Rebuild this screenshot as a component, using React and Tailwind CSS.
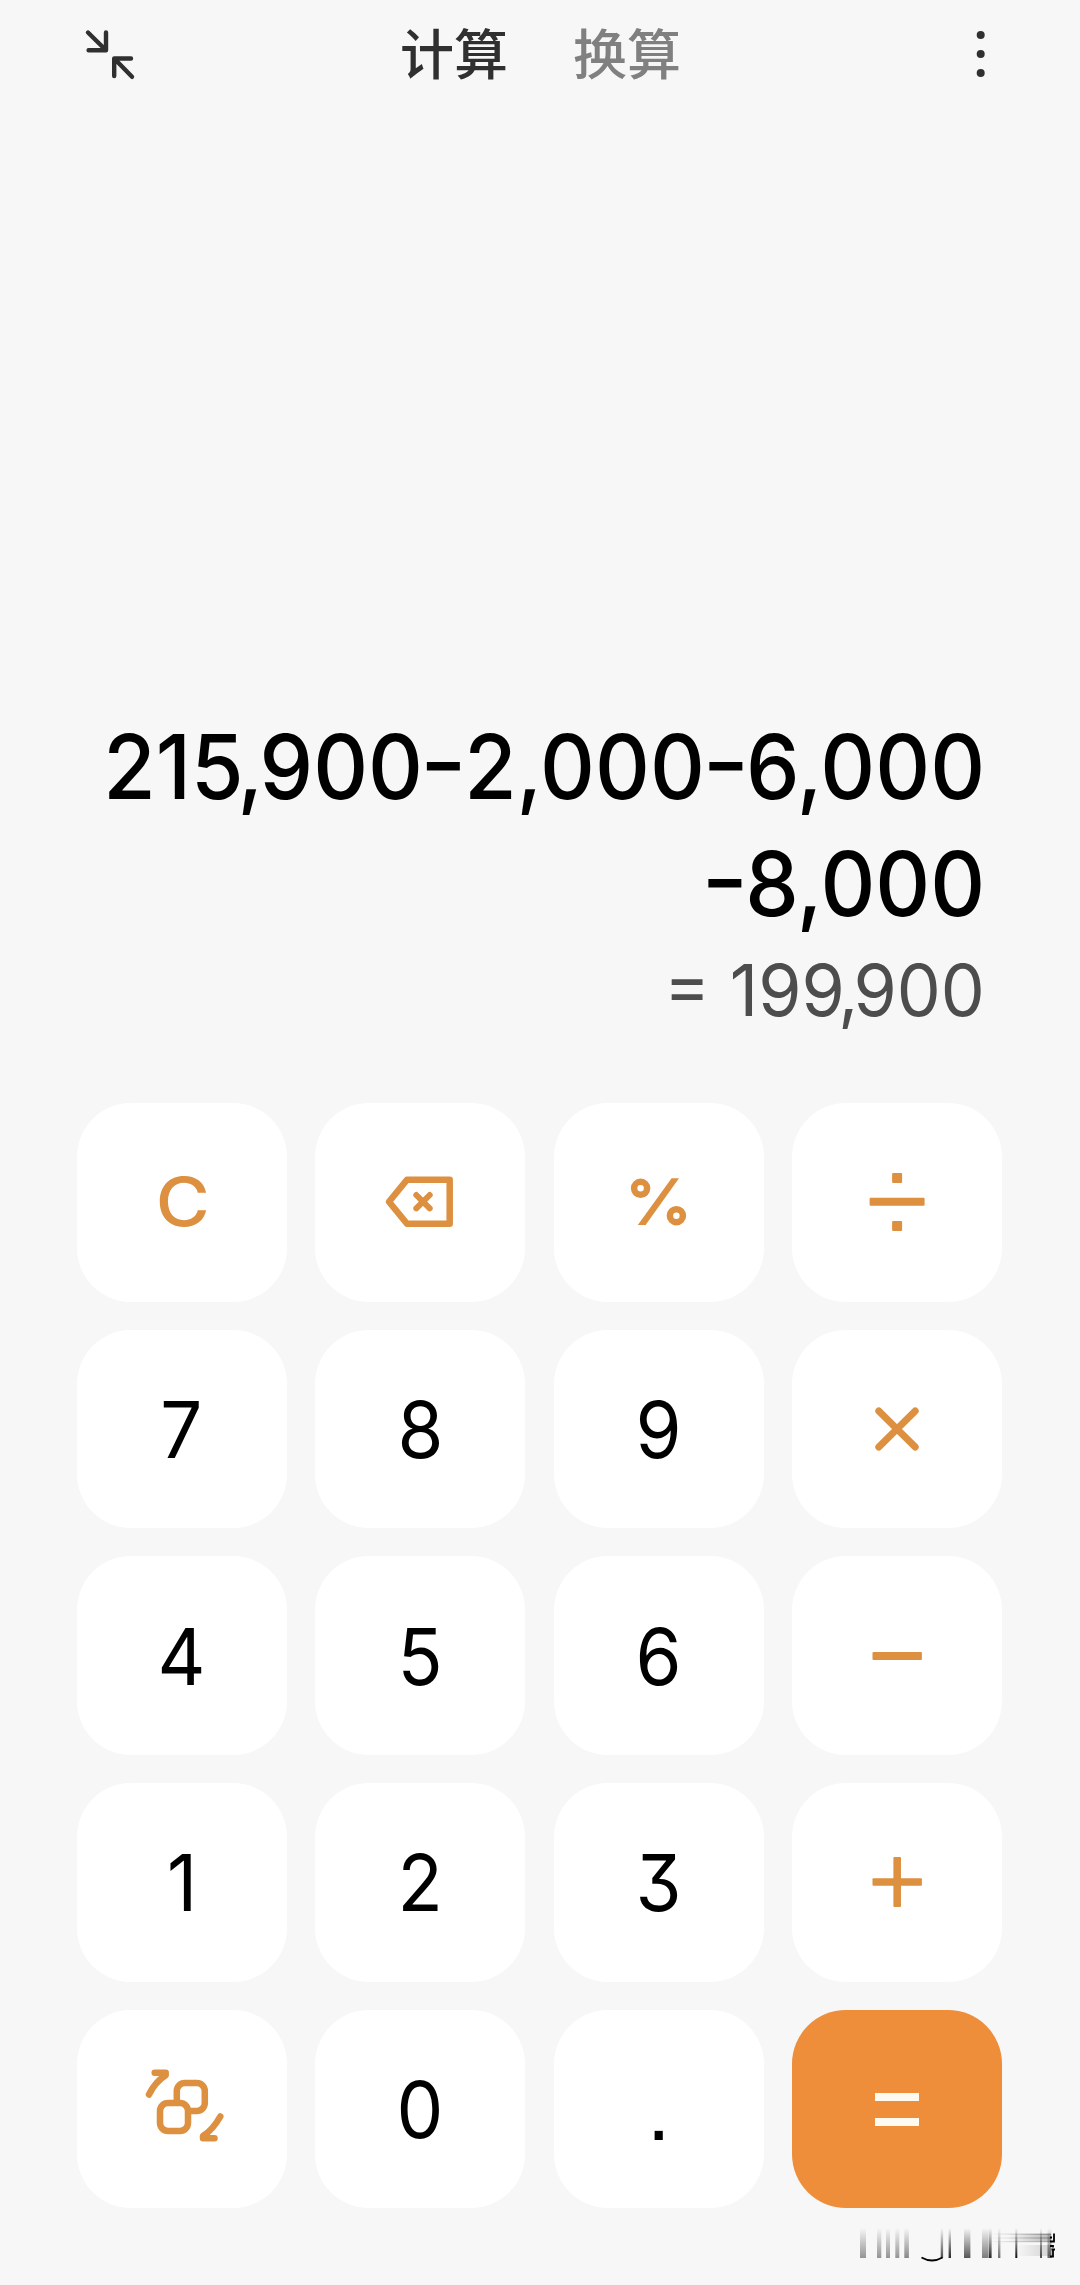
import React from 'react';

const accent = '#dc9040';

function Icon({ children }) {
  return (
    <svg
      className="w-[100px] h-[100px]"
      viewBox="-50 -50 100 100"
      fill="none"
      stroke={accent}
      strokeWidth="6.5"
      strokeLinecap="round"
      strokeLinejoin="round"
    >
      {children}
    </svg>
  );
}

const icons = {
  backspace: (
    <Icon>
      <path d="M-13 -22.3H29.7V21.7H-13L-31 -0.3Z" />
      <path d="M-3.7 -7L9.7 6.4M9.7 -7L-3.7 6.4" strokeWidth="6" />
    </Icon>
  ),
  percent: (
    <Icon>
      <circle cx="-18.4" cy="-13.7" r="6.5" />
      <circle cx="17.4" cy="13.7" r="6.5" />
      <path d="M12.6 -23.7H20L-13.4 23H-21.2Z" fill={accent} stroke="none" />
    </Icon>
  ),
  divide: (
    <Icon>
      <g fill={accent} stroke="none">
        <rect x="-27.4" y="-4.2" width="55" height="8" rx="1" />
        <rect x="-4.9" y="-29" width="10" height="10" rx="1" />
        <rect x="-4.9" y="19" width="10" height="10" rx="1" />
      </g>
    </Icon>
  ),
  multiply: (
    <Icon>
      <path d="M-18.2 -18L18.2 18M18.2 -18L-18.2 18" strokeWidth="7" />
    </Icon>
  ),
  minus: (
    <Icon>
      <rect x="-24.5" y="-4" width="49.4" height="8" rx="1" fill={accent} stroke="none" />
    </Icon>
  ),
  plus: (
    <Icon>
      <g fill={accent} stroke="none">
        <rect x="-24.5" y="-3.8" width="49.4" height="7.6" rx="1" />
        <rect x="-3.6" y="-25" width="7.6" height="50" rx="1" />
      </g>
    </Icon>
  ),
  swap: (
    <Icon>
      <rect x="-22" y="-6" width="28" height="28" rx="8" />
      <path d="M-5.2 -7V-18a8 8 0 0 1 8 -8H14.8a8 8 0 0 1 8 8V-6a8 8 0 0 1 -8 8H8" />
      <path d="M-33 -14.5Q-27 -27 -16.3 -33.8V-36.2H-27.3" />
      <path d="M38.3 7.5Q31 20.5 21 27V29.2H32.5" />
    </Icon>
  ),
};

const keys = [
  { id: 'clear', label: 'C', accent: true },
  { id: 'backspace' },
  { id: 'percent' },
  { id: 'divide' },
  { id: '7', label: '7' },
  { id: '8', label: '8' },
  { id: '9', label: '9' },
  { id: 'multiply' },
  { id: '4', label: '4' },
  { id: '5', label: '5' },
  { id: '6', label: '6' },
  { id: 'minus' },
  { id: '1', label: '1' },
  { id: '2', label: '2' },
  { id: '3', label: '3' },
  { id: 'plus' },
  { id: 'swap' },
  { id: '0', label: '0' },
  { id: 'dot', label: '.' },
];

function labelClass(key) {
  if (key.accent) return 'pl-0.5 pb-px text-[67px] font-medium text-[#dc9040] scale-x-[1.1]';
  if (key.id === 'dot') return "pt-px text-[86px] text-black font-['Liberation_Sans',sans-serif]";
  return 'pt-px text-[79px] text-black scale-x-[0.94]';
}

function Header() {
  return (
    <header className="h-[110px] pl-[84px] pr-[70px] flex items-start justify-between text-[#303030]">
      <svg className="w-[54px] h-[54px] mt-7" viewBox="84 28 54 54" fill="none" stroke="currentColor" strokeWidth="4.4" strokeLinecap="round" strokeLinejoin="round">
        <path d="M88 32.5L106 50.3M88.6 50.3H106V32.5" />
        <path d="M132 76.8L114.2 58.5M131 58.5H114.2V76" />
      </svg>
      <nav className="flex gap-[65px] mt-3 mr-[7px] text-[54px] leading-[80px] font-medium font-['Noto_Sans_CJK_SC',sans-serif]">
        <span>计算</span>
        <span className="text-[#808080]">换算</span>
      </nav>
      <svg className="w-[60px] h-[60px] mt-6" viewBox="950 24 60 60" fill="currentColor">
        <circle cx="980.7" cy="35" r="4" />
        <circle cx="980.7" cy="54" r="4" />
        <circle cx="980.7" cy="73" r="4" />
      </svg>
    </header>
  );
}

function Minus() {
  return <span className="inline-block mx-px scale-x-[1.2]">-</span>;
}

function Display() {
  return (
    <section className="h-[993px] pr-[95px] pb-[66px] flex flex-col items-end justify-end">
      <div className="text-[90px] leading-[117px] font-medium text-black text-right whitespace-nowrap origin-right scale-x-[0.945] [font-feature-settings:'case']">
        <div>
          21<span className="tracking-[-0.045em]">5,</span>900<Minus />2,000<Minus />6,000
        </div>
        <div><Minus />8,000</div>
      </div>
      <div className="text-[72px] leading-[95px] text-[#4d4d4d] whitespace-nowrap origin-right scale-x-[0.97]">
        = 19<span className="tracking-[-0.07em]">9,</span>900
      </div>
    </section>
  );
}

// faded strokes of the corner stamp: [x, width, opacity]
const bars = [
  [20, 6, 0.4], [37, 4.3, 0.4], [46, 4, 0.4], [55.3, 4, 0.4], [64.3, 4.6, 0.45],
  [100.7, 2.4, 0.7], [108.6, 2.4, 0.85], [124, 6.4, 0.65], [142, 6, 0.5], [148.6, 3, 0.85],
  [158, 2.4, 0.55], [175.3, 2, 0.95], [200, 2, 0.7], [207.5, 4, 0.6],
];

function Stamp() {
  return (
    <svg className="w-[240px] h-[75px] ml-auto" viewBox="0 0 240 75">
      <defs>
        <linearGradient id="fade" x1="0" y1="0" x2="0" y2="1">
          <stop offset="0" stopColor="#000" stopOpacity="0" />
          <stop offset="0.4" stopColor="#000" stopOpacity="0.4" />
          <stop offset="1" stopColor="#000" stopOpacity="1" />
        </linearGradient>
        <linearGradient id="trail" x1="0" y1="0" x2="1" y2="0">
          <stop offset="0" stopColor="#000" stopOpacity="0" />
          <stop offset="1" stopColor="#000" stopOpacity="0.5" />
        </linearGradient>
      </defs>
      {bars.map(([x, w, o]) => (
        <rect key={x} x={x} y="20" width={w} height="30" fill="url(#fade)" opacity={o} />
      ))}
      <rect x="168" y="26" width="43" height="7" fill="url(#trail)" opacity="0.5" />
      <rect x="150" y="25.5" width="61" height="1.2" fill="url(#trail)" opacity="0.7" />
      <rect x="150" y="29.5" width="61" height="1" fill="url(#trail)" opacity="0.7" />
      <rect x="150" y="33" width="61" height="1.2" fill="url(#trail)" opacity="0.7" />
      <rect x="176" y="37" width="35" height="11" fill="url(#trail)" opacity="0.3" />
      <path d="M81.5 49.5Q92 55.5 102.5 49.5" fill="none" stroke="#000" strokeWidth="1.8" />
      <path d="M214 25.5V33.5H210M210 29.5H212M210 38H213V39.5M215 41.5H211.5M213 41.5V48.5H210" fill="none" stroke="#000" strokeWidth="1.8" />
    </svg>
  );
}

export default function App() {
  return (
    <div className="w-[1080px] h-[2285px] overflow-hidden bg-[#f7f7f7] font-['Inter',sans-serif]">
      <Header />
      <Display />
      <main className="w-[925.5px] ml-[76.6px] grid grid-cols-4 gap-x-[28.5px] gap-y-[28.2px] [font-feature-settings:'cv09']">
        {keys.map((key) => (
          <button
            key={key.id}
            className="h-[198.5px] rounded-[54px] bg-white flex items-center justify-center leading-none"
          >
            {key.label ? <span className={labelClass(key)}>{key.label}</span> : icons[key.id]}
          </button>
        ))}
        <button className="h-[198.5px] rounded-[54px] bg-[#ee8d3a] flex flex-col items-center justify-center gap-[17px]">
          <span className="w-11 h-2 bg-[#fffaf0]" />
          <span className="w-11 h-2 bg-[#fffaf0]" />
        </button>
      </main>
      <Stamp />
    </div>
  );
}
